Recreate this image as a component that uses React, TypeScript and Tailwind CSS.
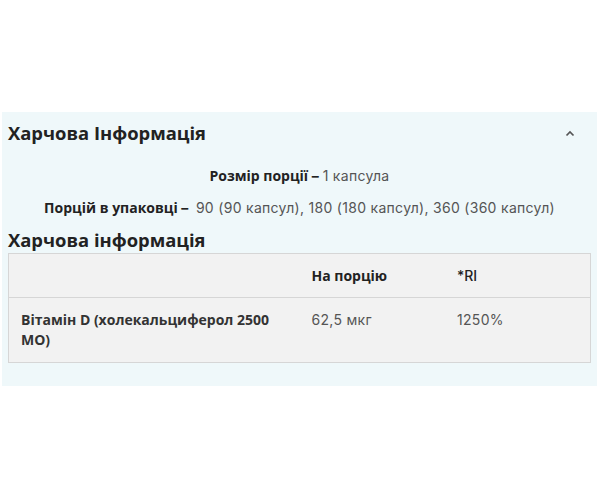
export default function App() {
  const val = { fontFamily: 'Inter, sans-serif' };
  return (
    <div className="w-[600px] h-[500px] bg-white pt-[112px] px-[2px]" style={{ fontFamily: '"Open Sans", sans-serif' }}>
      <div className="w-[595px] h-[274px] bg-[#eff8fa] px-[6px]">
        <div className="flex justify-between items-center h-[42px] pr-[16px]">
          <h2 className="text-[18.4px] font-bold text-[#222]">Харчова Інформація</h2>
          <svg width="10" height="7" viewBox="0 0 10 7" className="text-[#555]">
            <path d="M1.5 5.5 L5 2 L8.5 5.5" fill="none" stroke="currentColor" strokeWidth="1.7" />
          </svg>
        </div>
        <div className="flex flex-col items-center text-[14px] mt-[11px] gap-[11px]">
          <p className="text-[#555] tracking-[0.3px]" style={val}>
            <span className="font-bold text-[#222] tracking-normal" style={{ fontFamily: '"Open Sans", sans-serif' }}>Розмір порції</span>
            <span className="font-bold text-[#222]"> – </span>1 капсула
          </p>
          <p className="text-[#555] tracking-[0.3px]" style={val}>
            <span className="font-bold text-[#222] tracking-normal" style={{ fontFamily: '"Open Sans", sans-serif' }}>Порцій в упаковці</span>
            <span className="font-bold text-[#222]"> –&nbsp;&nbsp;</span>90 (90 капсул), 180 (180 капсул), 360 (360 капсул)
          </p>
        </div>
        <h3 className="text-[18.4px] font-bold text-[#222] mt-[9px] leading-[26px]">Харчова інформація</h3>
        <table className="w-[583px] border border-[#d6d6d6] bg-[#f2f2f2] text-[14px] border-collapse">
          <tbody>
            <tr className="h-[44px] border-b border-[#d6d6d6]">
              <td className="w-1/2 px-[12px]"></td>
              <td className="w-1/4 px-[12px] font-bold text-[#222]">На порцію</td>
              <td className="w-1/4 px-[12px] text-[#222] font-medium" style={val}>*RI</td>
            </tr>
            <tr className="h-[65px] align-top">
              <td className="px-[12px] pt-[12px] font-bold text-[#333] leading-[20px]">Вітамін D (холекальциферол 2500 МО)</td>
              <td className="px-[12px] pt-[12px] text-[#555] leading-[20px] tracking-[0.3px]" style={val}>62,5 мкг</td>
              <td className="px-[12px] pt-[12px] text-[#555] leading-[20px] tracking-[0.3px]" style={val}>1250%</td>
            </tr>
          </tbody>
        </table>
      </div>
    </div>
  );
}
